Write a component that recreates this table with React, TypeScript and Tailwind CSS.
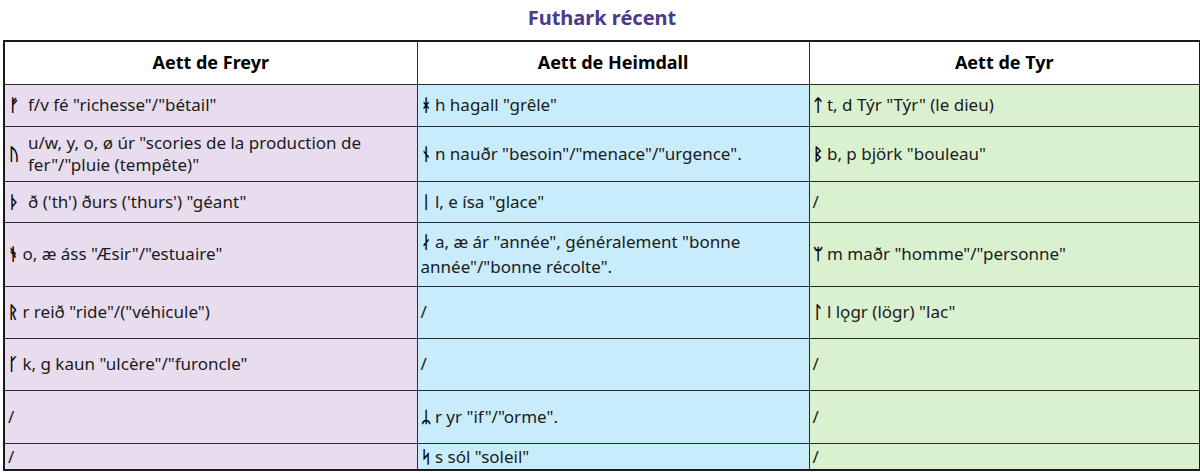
import React from "react";

const font = { fontFamily: '"Noto Sans", "DejaVu Sans", sans-serif' };

type Cell = { rune?: string; text: React.ReactNode; split?: boolean };

const purple = "bg-[#e8ddef]";
const blue = "bg-[#c9ecfa]";
const green = "bg-[#daf1d0]";

const rows: { h: string; cells: Cell[] }[] = [
  {
    h: "h-[42px]",
    cells: [
      { rune: "ᚠ", text: 'f/v fé "richesse"/"bétail"', split: true },
      { rune: "ᚼ", text: 'h hagall "grêle"' },
      { rune: "ᛏ", text: 't, d Týr "Týr" (le dieu)' },
    ],
  },
  {
    h: "h-[55px]",
    cells: [
      {
        rune: "ᚢ",
        text: (
          <>
            u/w, y, o, ø úr "scories de la production de
            <br />
            fer"/"pluie (tempête)"
          </>
        ),
        split: true,
      },
      { rune: "ᚾ", text: 'n nauðr "besoin"/"menace"/"urgence".' },
      { rune: "ᛒ", text: 'b, p björk "bouleau"' },
    ],
  },
  {
    h: "h-[41px]",
    cells: [
      { rune: "ᚦ", text: "ð ('th') ðurs ('thurs') \"géant\"", split: true },
      { rune: "ᛁ", text: 'l, e ísa "glace"' },
      { text: "/" },
    ],
  },
  {
    h: "h-[64px]",
    cells: [
      { rune: "ᚬ", text: 'o, æ áss "Æsir"/"estuaire"' },
      {
        text: (
          <span className="block leading-[25px]">
            <Rune r="ᛅ" /> a, æ ár "année", généralement "bonne
            <br />
            année"/"bonne récolte".
          </span>
        ),
      },
      { rune: "ᛘ", text: 'm maðr "homme"/"personne"' },
    ],
  },
  {
    h: "h-[52px]",
    cells: [
      { rune: "ᚱ", text: 'r reið "ride"/("véhicule")' },
      { text: "/" },
      { rune: "ᛚ", text: 'l lǫgr (lögr) "lac"' },
    ],
  },
  {
    h: "h-[52px]",
    cells: [
      { rune: "ᚴ", text: 'k, g kaun "ulcère"/"furoncle"' },
      { text: "/" },
      { text: "/" },
    ],
  },
  {
    h: "h-[53px]",
    cells: [
      { text: "/" },
      { rune: "ᛦ", text: 'r yr "if"/"orme".' },
      { text: "/" },
    ],
  },
  {
    h: "h-[25px]",
    cells: [
      { text: "/" },
      { rune: "ᛋ", text: 's sól "soleil"' },
      { text: "/" },
    ],
  },
];

const bgs = [purple, blue, green];

function Rune({ r }: { r: string }) {
  return <span className="font-bold text-black text-[17px]">{r}</span>;
}

function CellView({ c }: { c: Cell }) {
  if (c.split) {
    return (
      <div className="flex items-center">
        <span className="w-[20px] shrink-0 pl-[1px]">
          <Rune r={c.rune || ""} />
        </span>
        <span className="leading-[22px]">{c.text}</span>
      </div>
    );
  }
  return (
    <span>
      {c.rune ? (
        <>
          <Rune r={c.rune} />{" "}
        </>
      ) : null}
      {c.text}
    </span>
  );
}

export default function App() {
  return (
    <div className="w-[1200px] h-[473px] bg-white text-[#1b1b1b]" style={font}>
      <div className="h-[40px] flex items-center justify-center pl-[4px] pb-[4px]">
        <h1 className="text-[20px] font-bold text-[#4a3a8c]">Futhark récent</h1>
      </div>
      <table className="ml-[3px] w-[1196px] table-fixed border-collapse border-2 border-[#1a1a1a] text-[17px]">
        <colgroup>
          <col className="w-[413px]" />
          <col className="w-[392px]" />
          <col className="w-[391px]" />
        </colgroup>
        <thead>
          <tr className="h-[43px]">
            {["Aett de Freyr", "Aett de Heimdall", "Aett de Tyr"].map((t) => (
              <th
                key={t}
                className="border border-[#2a2a2a] bg-white font-bold text-[18px] text-black text-center align-middle"
              >
                {t}
              </th>
            ))}
          </tr>
        </thead>
        <tbody>
          {rows.map((r, i) => (
            <tr key={i} className={r.h}>
              {r.cells.map((c, j) => (
                <td
                  key={j}
                  className={`${bgs[j]} border border-[#2a2a2a] px-[3px] py-0 align-middle whitespace-nowrap`}
                >
                  <CellView c={c} />
                </td>
              ))}
            </tr>
          ))}
        </tbody>
      </table>
    </div>
  );
}
